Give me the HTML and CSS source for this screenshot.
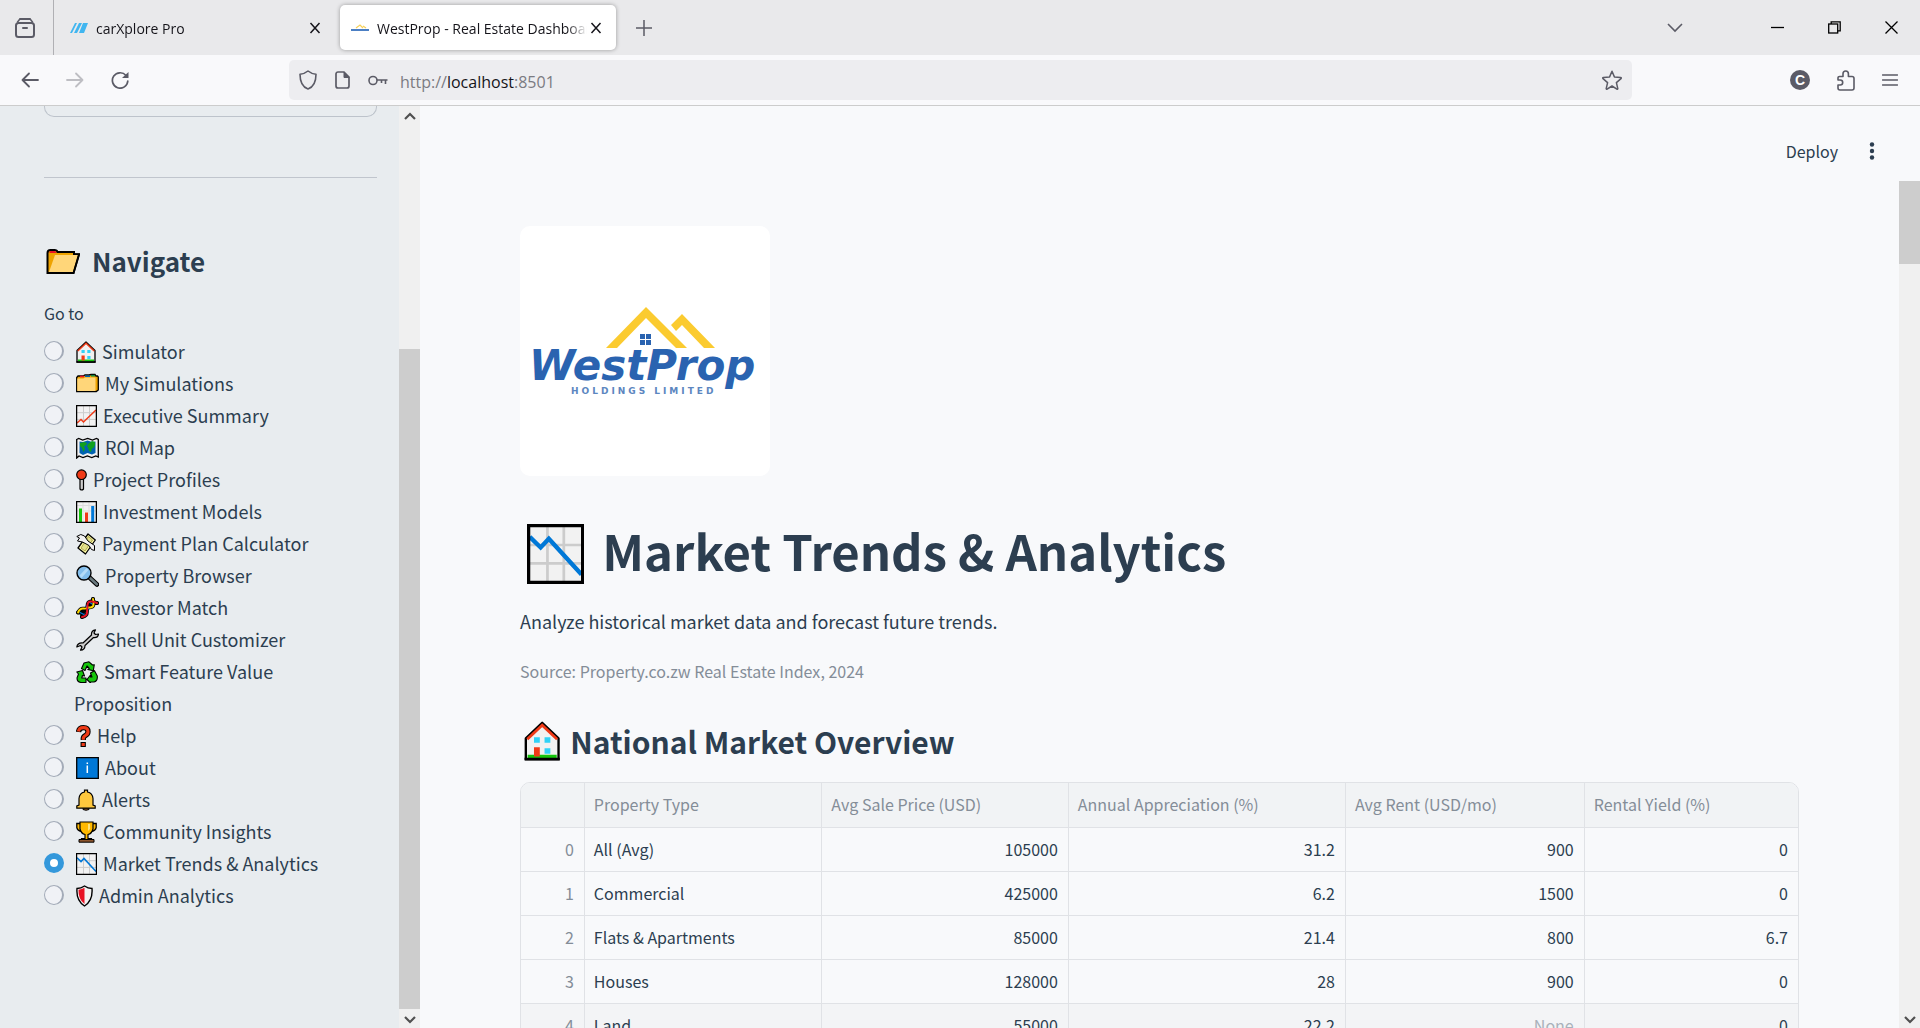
FILE: index.html
```html
<!DOCTYPE html>
<html lang="en">
<head>
<meta charset="utf-8">
<title>WestProp - Real Estate Dashboard</title>
<link rel="stylesheet" href="styles.css">
</head>
<body>
<svg class="sprite" aria-hidden="true">
  <symbol id="house" viewBox="0 0 20 22">
    <path d="M1 21V9.500L10 1l9 8.500V21z" fill="#f1f1f1" stroke="#000" stroke-width="1.300" stroke-linejoin="round"/>
    <path d="M1.800 10 10 2.300 18.200 10" fill="none" stroke="#f03a17" stroke-width="1.500"/>
    <path d="M2 18.500h16V20.500H2z" fill="#16c60c"/>
    <path d="M5.500 9h3.200v3H5.500zM11.300 9h3.200v3h-3.200zM11.300 15h3.200v3h-3.200z" fill="#31d2f7"/>
    <path d="M5.500 14.500h3.200v5H5.500z" fill="#f03a17"/>
    <path d="M.3 21h19.400" stroke="#000" stroke-width="1.500"/>
  </symbol>
  <symbol id="chart-down" viewBox="0 0 21 22">
    <path d="M1 1h19v20H1z" fill="#f2f2f2"/>
    <path d="M7.500 1v20M13.500 1v20M1 7.700h19M1 14.400h19" stroke="#ccc" stroke-width="1"/>
    <path d="M1 4.700l4 3.900L8 5.400 20 18.500" fill="none" stroke="#0078d7" stroke-width="1.600"/>
    <path d="M.6 .6h19.800v20.800H.6z" fill="none" stroke="#000" stroke-width="1.200"/>
  </symbol>
</svg>

<header class="tabstrip">
  <button class="tab-view" aria-label="View recent browsing">
    <svg width="20" height="22" viewBox="0 0 20 22" fill="none" stroke="#5b5b66" stroke-width="2" stroke-linecap="round"><path d="M5 2h10" /><path d="M2.500 5l2-2.500M17.500 5l-2-2.500" stroke-width="1.500"/><rect x="1" y="6" width="18" height="14" rx="2.500"/><path d="M8 11h4"/></svg>
  </button>
  <div class="tab">
    <svg class="favicon" width="18" height="12" viewBox="0 0 18 12"><path d="M0 11 5 1h2L2 11zM4 11 9 1h3L7 11zM9 11l4-10h5l-4 10z" fill="#41b6f0"/></svg>
    <span class="tab-title">carXplore Pro</span>
    <button class="tab-close" aria-label="Close tab"><svg width="12" height="12" viewBox="0 0 12 12"><path d="M1.500 1l9 10M10.500 1l-9 10" stroke="#15141a" stroke-width="1.500"/></svg></button>
  </div>
  <div class="tab tab-active">
    <svg class="favicon" width="18" height="8" viewBox="0 0 18 8"><path d="M5 4l4-3 3 3M12 2l3 2" fill="none" stroke="#f7d15a" stroke-width="1.200"/><path d="M0 6h18" stroke="#4b7fc4" stroke-width="2"/></svg>
    <span class="tab-title">WestProp - Real Estate Dashboard</span>
    <button class="tab-close" aria-label="Close tab"><svg width="12" height="12" viewBox="0 0 12 12"><path d="M1.500 1l9 10M10.500 1l-9 10" stroke="#15141a" stroke-width="1.500"/></svg></button>
  </div>
  <button class="new-tab" aria-label="New tab"><svg width="16" height="16" viewBox="0 0 16 16"><path d="M8 0v16M0 8h16" stroke="#5b5b66" stroke-width="1.500"/></svg></button>
  <div class="window-controls">
    <button aria-label="List all tabs"><svg width="16" height="10" viewBox="0 0 16 10"><path d="M1 1l7 7 7-7" fill="none" stroke="#5b5b66" stroke-width="1.600"/></svg></button>
    <button class="minimize" aria-label="Minimize"><svg width="13" height="12" viewBox="0 0 13 12"><path d="M0 5.500h13" stroke="#000" stroke-width="1.300"/></svg></button>
    <button aria-label="Restore"><svg width="13" height="13" viewBox="0 0 13 13" fill="none" stroke="#000" stroke-width="1.300"><rect x=".7" y="3" width="9" height="9"/><path d="M3.200 3V.8h9v9H9.700"/></svg></button>
    <button aria-label="Close"><svg width="13" height="13" viewBox="0 0 13 13"><path d="M.5.5l12 12M12.500.5l-12 12" stroke="#000" stroke-width="1.300"/></svg></button>
  </div>
</header>

<nav class="toolbar" aria-label="Browser">
  <div class="history">
    <button aria-label="Back"><svg width="18" height="16" viewBox="0 0 18 16" fill="none" stroke="#5b5b66" stroke-width="1.800" stroke-linecap="round" stroke-linejoin="round"><path d="M17 8H1.500M8 1.500 1.500 8 8 14.500"/></svg></button>
    <button aria-label="Forward"><svg width="18" height="16" viewBox="0 0 18 16" fill="none" stroke="#bebec3" stroke-width="1.800" stroke-linecap="round" stroke-linejoin="round"><path d="M1 8h15.500M10 1.500 16.500 8 10 14.500"/></svg></button>
    <button aria-label="Reload"><svg width="18" height="18" viewBox="0 0 18 18"><path d="M15 4.500A7.700 7.700 0 1 0 16.800 10" fill="none" stroke="#5b5b66" stroke-width="1.700" stroke-linecap="round"/><path d="M17.500 1v6h-6.500z" fill="#5b5b66"/></svg></button>
  </div>
  <div class="urlbar">
    <svg width="18" height="20" viewBox="0 0 18 20"><path d="M9 1c2.500 2 5 3 8 3.200C17 11.500 14.500 17 9 19 3.500 17 1 11.500 1 4.200 4 4 6.500 3 9 1z" fill="none" stroke="#5b5b66" stroke-width="1.600" stroke-linejoin="round"/></svg>
    <svg width="15" height="18" viewBox="0 0 15 18"><path d="M3 1h6l5 5v9a2 2 0 0 1-2 2H3a2 2 0 0 1-2-2V3a2 2 0 0 1 2-2z" fill="none" stroke="#5b5b66" stroke-width="1.700"/><path d="M9 1v5.500h5z" fill="#5b5b66" stroke="#5b5b66"/></svg>
    <svg width="20" height="11" viewBox="0 0 20 11"><circle cx="5" cy="5.500" r="4" fill="none" stroke="#5b5b66" stroke-width="1.600"/><path d="M9 5h10.500M17.500 5v4M13.500 5v3" fill="none" stroke="#5b5b66" stroke-width="1.600"/></svg>
    <a class="url" href="http://localhost:8501">http://<strong>localhost</strong>:8501</a>
    <button class="bookmark" aria-label="Bookmark this page"><svg width="20" height="20" viewBox="0 0 20 20"><path d="M10 1.200l2.400 5.700 6.200.5c.7.100.9.700.4 1.200l-4.600 4 1.400 6c.1.600-.4.900-.9.600L10 16l-4.900 3.200c-.5.300-1 0-.9-.6l1.400-6L1 8.600c-.5-.5-.3-1.100.4-1.200l6.200-.5z" fill="none" stroke="#5b5b66" stroke-width="1.500" stroke-linejoin="round"/></svg></button>
  </div>
  <div class="actions">
    <button class="account" aria-label="Account">C</button>
    <button aria-label="Extensions"><svg width="18" height="21" viewBox="0 0 18 21"><path d="M2.500 6.500H6V3.700a2.700 2.700 0 0 1 5.400 0v2.800H15a2 2 0 0 1 2 2V18a2 2 0 0 1-2 2H3a2 2 0 0 1-2-2v-3h2.200a2.500 2.500 0 0 0 0-5H1V8a1.500 1.500 0 0 1 1.500-1.500z" fill="none" stroke="#5b5b66" stroke-width="1.600" stroke-linejoin="round"/></svg></button>
    <button aria-label="Application menu"><svg width="16" height="14" viewBox="0 0 16 14"><path d="M.5 2h15M.5 7h15M.5 12h15" stroke="#5b5b66" stroke-width="1.400" stroke-linecap="round"/></svg></button>
  </div>
</nav>

<div class="app">
  <aside class="sidebar">
    <div class="sidebar-content">
      <div class="panel-end"></div>
      <hr class="rule">
      <h2 class="nav-title">
        <svg width="34" height="25" viewBox="0 0 34 25"><path d="M1.500 24V4q0-3 3-3h4q2.500 0 3 2H28v2.500h5L27.500 24z" fill="#eea300" stroke="#000" stroke-width="2"/><path d="M3.500 4V3q0-1 1.500-1h3.500q1.500 0 2 2z" fill="#e81224"/><path d="M9 6h23l-5.200 17H3z" fill="#ffd679"/><path d="M28 5.200h5L27.500 24H1.500" fill="none" stroke="#000" stroke-width="1.800"/></svg>
        Navigate
      </h2>
      <fieldset class="pages">
        <legend>Go to</legend>
        <label><input type="radio" name="page"><span><svg viewBox="0 0 20 22"><use href="#house"/></svg> Simulator</span></label>
        <label><input type="radio" name="page"><span><svg viewBox="0 0 23 22"><path d="M.7 18.500v-14l1.300-1.500h5l2-1h4l2-.5h4l1 1.500h1.500l.8 1V17l-2 1.500z" fill="#eea300" stroke="#000" stroke-width="1.300"/><path d="M4 3.500h4" stroke="#e81224" stroke-width="1.600"/><path d="M9 3.200h5" stroke="#0063b1" stroke-width="1.600"/><path d="M15 2.700h4" stroke="#10893e" stroke-width="1.600"/><path d="M1.300 5.500h6l2-1H19.500V18H1.300z" fill="#ffd679"/></svg> My Simulations</span></label>
        <label><input type="radio" name="page"><span><svg viewBox="0 0 21 22"><path d="M1 1h19v20H1z" fill="#f2f2f2"/><path d="M7.500 1v20M13.500 1v20M1 7.700h19M1 14.400h19" stroke="#ccc"/><path d="M1 18l4-3.500L7.500 17 20 5" fill="none" stroke="#f03a17" stroke-width="1.500"/><path d="M.6.6h19.800v20.800H.6z" fill="none" stroke="#000" stroke-width="1.300"/></svg> Executive Summary</span></label>
        <label><input type="radio" name="page"><span><svg viewBox="0 0 23 22"><path d="M.7 2.500l2-1 4 1.500 5-1.500L16.500 3l4-1.500 1.800 1V20l-2.500-1-4 1.500-4.500-1.500L7 20.500 3 19 .7 21z" fill="#f2f2f2" stroke="#000" stroke-width="1.300"/><path d="M3.500 4.500 7 5l4.500-1.500L16 5l3.500-.5V16l-3.500 1.500-4.500-1.500L7 18l-3.500-2z" fill="#0063b1"/><path d="M4 6l4-1 3 1-1 2.500-2 .5 1 3-1.500 3L6 11 4 9zM12 7l4-3 3 1v3l-1.500 3-1.500.5L15 15l-2-1-1-3.500-1-1z" fill="#10a01e"/></svg> ROI Map</span></label>
        <label><input type="radio" name="page"><span><svg viewBox="0 0 11 22"><path d="M4 10h3.500v10q-1.700 2-3.500 0z" fill="#ccc" stroke="#000" stroke-width="1.200"/><circle cx="5.500" cy="5.700" r="4.800" fill="#f03a17" stroke="#000" stroke-width="1.200"/></svg> Project Profiles</span></label>
        <label><input type="radio" name="page"><span><svg viewBox="0 0 21 22"><path d="M1 1h19v20H1z" fill="#f2f2f2"/><path d="M1 4.500h19M1 10h19M7 1v20M13 1v20" stroke="#ddd"/><path d="M3 7.500h3V21H3z" fill="#16c60c"/><path d="M9 11.500h3V21H9z" fill="#f03a17"/><path d="M15.200 5h3V21h-3z" fill="#0078d7"/><path d="M.6.6h19.800v20.800H.6z" fill="none" stroke="#000" stroke-width="1.300"/></svg> Investment Models</span></label>
        <label><input type="radio" name="page"><span><svg viewBox="0 0 20 22"><path d="M2 15 12 1l7.300 6L9.500 21z" fill="#fffba8" stroke="#000" stroke-width="1.300" stroke-linejoin="round"/><path d="M5 15l7.500-11.500L16.500 7 9 18z" fill="#e3e08a" stroke="#9a9440" stroke-width=".8"/><path d="M.8 3.500l4-2 3.700 1.500 3.500 5 6.500 4.500v5l-3-1-2.500-4-6.500-3.500-5-1L3.500 5z" fill="#f2f2f2" stroke="#000"/></svg> Payment Plan Calculator</span></label>
        <label><input type="radio" name="page"><span><svg viewBox="0 0 23 22"><path d="M13.500 12.500l7.500 7" stroke="#000" stroke-width="4.600" stroke-linecap="round"/><path d="M13.500 12.500l7.300 6.800" stroke="#69797e" stroke-width="2.600" stroke-linecap="round"/><circle cx="8" cy="8" r="7" fill="#83beec" stroke="#000" stroke-width="1.400"/><path d="M3.500 10.500 10.500 3l2 2L5.500 13z" fill="#b3dbf8"/></svg> Property Browser</span></label>
        <label><input type="radio" name="page"><span><svg viewBox="0 0 23 22" fill="none" stroke-linecap="round"><path d="M2 15.500C9 15.500 9 13 11.500 10.500S14 5.500 21 6M6 20c0-6 3-7 5.500-9.500S17 8 17 2" stroke="#000" stroke-width="4"/><path d="M2 15.500Q4 11 7.500 11.500T11.500 10.500Q11 5 14 4.500T21 6M6 20q5-1 5-4.500T11.500 10.500Q17 11 17.500 8T17 2" stroke="#000" stroke-width="3.600"/><path d="M4 15.500l4 2M13 5l4 2.500M10 9l3 3" stroke="#0078d7" stroke-width="1.300"/><path d="M2 15.500Q4 11 7.500 11.500T11.500 10.500Q17 11 17.500 8T17 2" stroke="#ffd800" stroke-width="1.900"/><path d="M6 20q5-1 5-4.500T11.500 10.500Q11 5 14 4.500T21 6" stroke="#e81224" stroke-width="2"/></svg> Investor Match</span></label>
        <label><input type="radio" name="page"><span><svg viewBox="0 0 23 22"><path d="M7 14 15.500 6Q15 1.500 19.500.8L18 4l1.500 1.500 3-.5Q22 9 17.500 8.500L9 16.500Q9 21 4.500 21.200L6 18l-1.500-1.500L.8 18Q1.500 13.500 7 14z" fill="#ccc" stroke="#000" stroke-width="1.200" stroke-linejoin="round"/></svg> Shell Unit Customizer</span></label>
        <label><input type="radio" name="page"><span><svg viewBox="0 0 22 22" stroke="#000" stroke-linejoin="round"><path d="M5.500 7.500 8 2l5-1.200L16.500 4l1.800-.3-1 6-5.500-1.300 1.500-1L11 5 9 9.500zM.8 11l5.700-1.500L8.500 15l-2-.5-.8 2.500H10v4.500H5Q1 21 1 17l1.500-4zM11 18.500l3.500-4.500v2h1.500l-1.500-4 4-2.300L21.300 15q.5 5-3.300 6h-3.500v1z" fill="#16c60c" stroke-width="1.100"/></svg> Smart Feature Value Proposition</span></label>
        <label><input type="radio" name="page"><span><svg viewBox="0 0 15 22" fill="none"><path d="M2.500 7Q3 2.700 7.500 2.700t4.500 4Q12 9 9.500 10.500T7.300 14v1M7.200 17v5" stroke="#000" stroke-width="5.300"/><path d="M2.500 6.500Q3 2.700 7.500 2.700t4.500 4Q12 9 9.500 10.500T7.300 14v.7M7.200 18v3" stroke="#f03a17" stroke-width="3.200"/></svg> Help</span></label>
        <label><input type="radio" name="page"><span><svg viewBox="0 0 23 22"><path d="M.7.7h21.600v20.600H.7z" fill="#0078d7" stroke="#000" stroke-width="1.300"/><path d="M11.300 8.500V16M11.300 5.500V7" stroke="#fff" stroke-width="1.500"/></svg> About</span></label>
        <label><input type="radio" name="page"><span><svg viewBox="0 0 20 22"><path d="M7 19h6v1.500q-3 1.500-6 0z" fill="#8e562e" stroke="#000"/><path d="M.8 19.200V17l2.200-1V9.500Q3.500 4 8.500 3V1.200h3V3q5 1 5.500 6.500V16l2.200 1v2.200z" fill="#ffc83d" stroke="#000" stroke-width="1.200"/></svg> Alerts</span></label>
        <label><input type="radio" name="page"><span><svg viewBox="0 0 21 22"><path d="M5 2.500H.8v4Q1.500 10 6 10.500M16 2.500h4.200v4q-.7 3.500-5.200 4" fill="#ffb900" stroke="#000" stroke-width="1.300"/><path d="M4 1h13v7q-1 4.500-5 5.500v4h3.500V20h-10v-2.500H9v-4Q5 12.500 4 8z" fill="#ffb900" stroke="#000" stroke-width="1.200"/><path d="M12 3h2v5l-2 2z" fill="#ffe27a"/><path d="M3 18.500h15v2.700H3z" fill="#8e562e" stroke="#000"/></svg> Community Insights</span></label>
        <label><input type="radio" name="page" checked><span><svg viewBox="0 0 21 22"><use href="#chart-down"/></svg> Market Trends &amp; Analytics</span></label>
        <label><input type="radio" name="page"><span><svg viewBox="0 0 17 22"><path d="M1 3.500Q5 3.500 8.500 1q3.500 2.500 7.500 2.500Q17 15.500 8.500 21 0 15.500 1 3.500z" fill="#f2f2f2" stroke="#000" stroke-width="1.400"/><path d="M8.500 2.800V19Q2.200 14.500 2.500 4.800q3.500-.3 6-2z" fill="#e81224"/></svg> Admin Analytics</span></label>
      </fieldset>
    </div>
    <div class="scrollbar scrollbar-side">
      <svg width="12" height="8" viewBox="0 0 12 8"><path d="M1 7l5-5 5 5" fill="none" stroke="#505050" stroke-width="2.200"/></svg>
      <div class="thumb"></div>
      <svg width="12" height="8" viewBox="0 0 12 8"><path d="M1 1l5 5 5-5" fill="none" stroke="#505050" stroke-width="2.200"/></svg>
    </div>
  </aside>

  <main class="main">
    <div class="topbar">
      <button class="deploy">Deploy</button>
      <button class="kebab" aria-label="Main menu"><svg width="6" height="18" viewBox="0 0 6 18" fill="#2c3e50"><circle cx="3" cy="2.500" r="2.200"/><circle cx="3" cy="9" r="2.200"/><circle cx="3" cy="15.500" r="2.200"/></svg></button>
    </div>
    <div class="scroll-area">
      <div class="content">
        <svg class="logo" width="250" height="250" viewBox="0 0 250 250" role="img" aria-label="WestProp Holdings Limited">
          <rect width="250" height="250" rx="10" fill="#fff"/>
          <path d="M86 122 126 81l41 41h-11L126 92 97 122zM151 99l11-11 33 34h-11l-22-23-6 6z" fill="#fbcb30"/>
          <path d="M120 108h5v5h-5zM126 108h5v5h-5zM120 114h5v5h-5zM126 114h5v5h-5z" fill="#2a63b0"/>
          <text class="logo-name" x="9" y="154">WestProp</text>
          <text class="logo-sub" x="51" y="168">HOLDINGS LIMITED</text>
        </svg>
        <h1><svg viewBox="0 0 21 22"><use href="#chart-down"/></svg>Market Trends &amp; Analytics</h1>
        <p class="lead">Analyze historical market data and forecast future trends.</p>
        <p class="caption">Source: Property.co.zw Real Estate Index, 2024</p>
        <h2><svg viewBox="0 0 20 22"><use href="#house"/></svg>National Market Overview</h2>
        <div class="grid-frame">
          <table>
            <colgroup><col class="c-index"><col class="c-type"><col class="c-sale"><col class="c-appr"><col class="c-rent"><col class="c-yield"></colgroup>
            <thead><tr><th></th><th>Property Type</th><th>Avg Sale Price (USD)</th><th>Annual Appreciation (%)</th><th>Avg Rent (USD/mo)</th><th>Rental Yield (%)</th></tr></thead>
            <tbody>
              <tr><th>0</th><td>All (Avg)</td><td>105000</td><td>31.2</td><td>900</td><td>0</td></tr>
              <tr><th>1</th><td>Commercial</td><td>425000</td><td>6.2</td><td>1500</td><td>0</td></tr>
              <tr><th>2</th><td>Flats &amp; Apartments</td><td>85000</td><td>21.4</td><td>800</td><td>6.7</td></tr>
              <tr><th>3</th><td>Houses</td><td>128000</td><td>28</td><td>900</td><td>0</td></tr>
              <tr class="hover"><th>4</th><td>Land</td><td>55000</td><td>22.2</td><td class="none">None</td><td>0</td></tr>
            </tbody>
          </table>
        </div>
      </div>
      <div class="scrollbar scrollbar-main">
        <div class="thumb"></div>
        <svg width="12" height="8" viewBox="0 0 12 8"><path d="M1 1l5 5 5-5" fill="none" stroke="#505050" stroke-width="2.200"/></svg>
      </div>
    </div>
  </main>
</div>
</body>
</html>
```
FILE: styles.css
```css
* { box-sizing: border-box; }

body {
  margin: 0;
  height: 100vh;
  display: flex;
  flex-direction: column;
  overflow: hidden;
  background: #f8f9fb;
  color: #2c3e50;
  font-family: "Noto Sans CJK JP", "Noto Sans", sans-serif;
  font-size: 18px;
}

button {
  display: flex;
  align-items: center;
  justify-content: center;
  padding: 0;
  border: 0;
  background: none;
  color: inherit;
  font: inherit;
}

svg { flex: none; }
.sprite { position: absolute; width: 0; height: 0; }

/* Browser tabs */
.tabstrip {
  flex: none;
  display: flex;
  align-items: center;
  height: 55px;
  background: #e9e9eb;
  color: #15141a;
  font: 14px/20px "Open Sans", sans-serif;
}
.tab-view {
  width: 54px;
  height: 55px;
  border-right: 1px solid #b0b0b4;
  padding-right: 4px;
}
.tab {
  display: flex;
  align-items: center;
  gap: 8px;
  width: 276px;
  height: 45px;
  margin-left: 5px;
  padding: 0 13px 0 11px;
  border-radius: 5px;
}
.tab-active {
  background: #fff;
  box-shadow: 0 0 4px rgba(0, 0, 0, .35);
}
.tab-title {
  flex: 1;
  margin-right: -6px;
  padding-top: 2px;
  overflow: hidden;
  white-space: nowrap;
  mask-image: linear-gradient(to left, transparent, #000 20px);
}
.tab-close { width: 14px; }
.new-tab { width: 24px; margin-left: 16px; }
.window-controls {
  display: flex;
  align-items: center;
  margin-left: auto;
}
.window-controls button { width: 57px; height: 54px; }
.window-controls .minimize { margin-left: 46px; }

/* Browser toolbar */
.toolbar {
  flex: none;
  display: flex;
  align-items: center;
  height: 51px;
  padding: 0 20px;
  background: #f9f9fb;
  border-bottom: 1px solid #ccc;
}
.history { display: flex; gap: 27px; width: 269px; padding-left: 1px; }
.urlbar {
  flex: 1;
  display: flex;
  align-items: center;
  gap: 18px;
  height: 40px;
  padding: 0 10px;
  border-radius: 5px;
  background: #ededf0;
}
.url {
  margin-left: -6px;
  padding-top: 3px;
  color: #7b7b82;
  font: 16px/24px "Open Sans", sans-serif;
  text-decoration: none;
}
.url strong { color: #15141a; font-weight: 400; }
.bookmark { margin-left: auto; }
.actions {
  display: flex;
  align-items: center;
  justify-content: flex-end;
  gap: 27px;
  width: 268px;
  padding-right: 2px;
}
.account {
  width: 20px;
  height: 20px;
  border-radius: 50%;
  background: #5b5b66;
  color: #fff;
  font: bold 14px/20px "Liberation Sans", sans-serif;
}

/* App shell */
.app { flex: 1; display: flex; min-height: 0; }
.sidebar {
  flex: none;
  display: flex;
  width: 420px;
  background: #e8ecef;
}
.sidebar-content { flex: 1; padding: 0 22px 0 44px; overflow: hidden; }
.panel-end {
  height: 11px;
  border: 1px solid #bdc3cb;
  border-top: 0;
  border-radius: 0 0 10px 10px;
}
.rule {
  margin: 60px 0 0;
  border: 0;
  border-top: 1px solid #c0c5cd;
}
.nav-title {
  display: flex;
  align-items: center;
  gap: 12px;
  margin: 63px 0 0;
  padding-left: 2px;
  font-size: 26px;
  line-height: 40px;
  font-weight: 600;
}
.pages { margin: 0; padding: 0; border: 0; min-width: 0; }
.pages legend {
  padding: 18px 0 8px;
  font-size: 16px;
  line-height: 28px;
}
.pages label {
  display: flex;
  gap: 10px;
  padding-right: 12px;
  line-height: 32px;
}
.pages input {
  flex: none;
  appearance: none;
  width: 20px;
  height: 20px;
  margin: 6px 0 0;
  border: 1px solid #a3abb8;
  border-right-width: 2px;
  border-radius: 50%;
  background: #f0f2f6;
}
.pages input:checked { border: 6px solid #3498db; background: #fff; }
.pages svg {
  height: 22px;
  margin: 0 2px;
  vertical-align: -4px;
}

/* Scrollbars */
.scrollbar {
  flex: none;
  display: flex;
  flex-direction: column;
  align-items: center;
  width: 21px;
  background: #f0f0f0;
}
.scrollbar .thumb { width: 100%; background: #cdcdcd; }
.scrollbar-side { padding: 6px 0 4px; }
.scrollbar-side .thumb { flex: 1; margin: 229px 0 7px; }
.scrollbar-main { justify-content: space-between; padding-bottom: 4px; }
.scrollbar-main .thumb { height: 83px; }

/* Main pane */
.main {
  flex: 1;
  display: flex;
  flex-direction: column;
  min-width: 0;
}
.topbar {
  flex: none;
  display: flex;
  align-items: center;
  justify-content: flex-end;
  gap: 31px;
  height: 75px;
  padding: 15px 45px 0 0;
}
.deploy { font-size: 16px; line-height: 28px; }
.scroll-area { flex: 1; display: flex; min-height: 0; }
.content {
  flex: 1;
  min-width: 0;
  padding: 45px 100px 0;
  overflow: hidden;
}
.logo { display: block; }
.logo-name {
  font: italic bold 42px "DejaVu Sans", sans-serif;
  fill: #2a63b0;
}
.logo-sub {
  font: bold 9px "DejaVu Sans", sans-serif;
  letter-spacing: 3px;
  fill: #5c86c0;
}
h1, .content h2 { display: flex; align-items: center; margin: 0; }
h1 {
  gap: 18px;
  margin-top: 38px;
  padding-left: 7px;
  font-size: 49px;
  line-height: 72px;
  font-weight: 700;
}
h1 svg { height: 60px; margin-top: 8px; }
.lead { margin: 19px 0 0; line-height: 32px; }
.caption {
  margin: 20px 0 0;
  color: #848d98;
  font-size: 16px;
  line-height: 28px;
}
.content h2 {
  gap: 10px;
  margin-top: 32px;
  padding-left: 4px;
  font-size: 30px;
  line-height: 48px;
  font-weight: 600;
}
.content h2 svg { height: 40px; }

/* Data grid */
.grid-frame {
  margin-top: 17px;
  border: 1px solid #e0e2e6;
  border-radius: 10px 10px 0 0;
  overflow: hidden;
}
table {
  width: 100%;
  table-layout: fixed;
  border-collapse: separate;
  border-spacing: 0;
  font-size: 16px;
  line-height: 24px;
}
.c-index { width: 5%; }
.c-type { width: 18.6%; }
.c-sale { width: 19.3%; }
.c-appr { width: 21.7%; }
.c-rent { width: 18.7%; }
th, td {
  height: 44px;
  padding: 0 10px 2px 9px;
  border-right: 1px solid #e0e2e6;
  border-bottom: 1px solid #e0e2e6;
  font-weight: 400;
  text-align: right;
  white-space: nowrap;
}
th { color: #848d98; }
thead th { height: 45px; background: #f1f3f5; text-align: left; }
td:nth-child(2) { text-align: left; }
th:last-child, td:last-child { border-right: 0; }
.hover { background: #f3f4f6; }
.none { color: #a9b1ba; }
```
